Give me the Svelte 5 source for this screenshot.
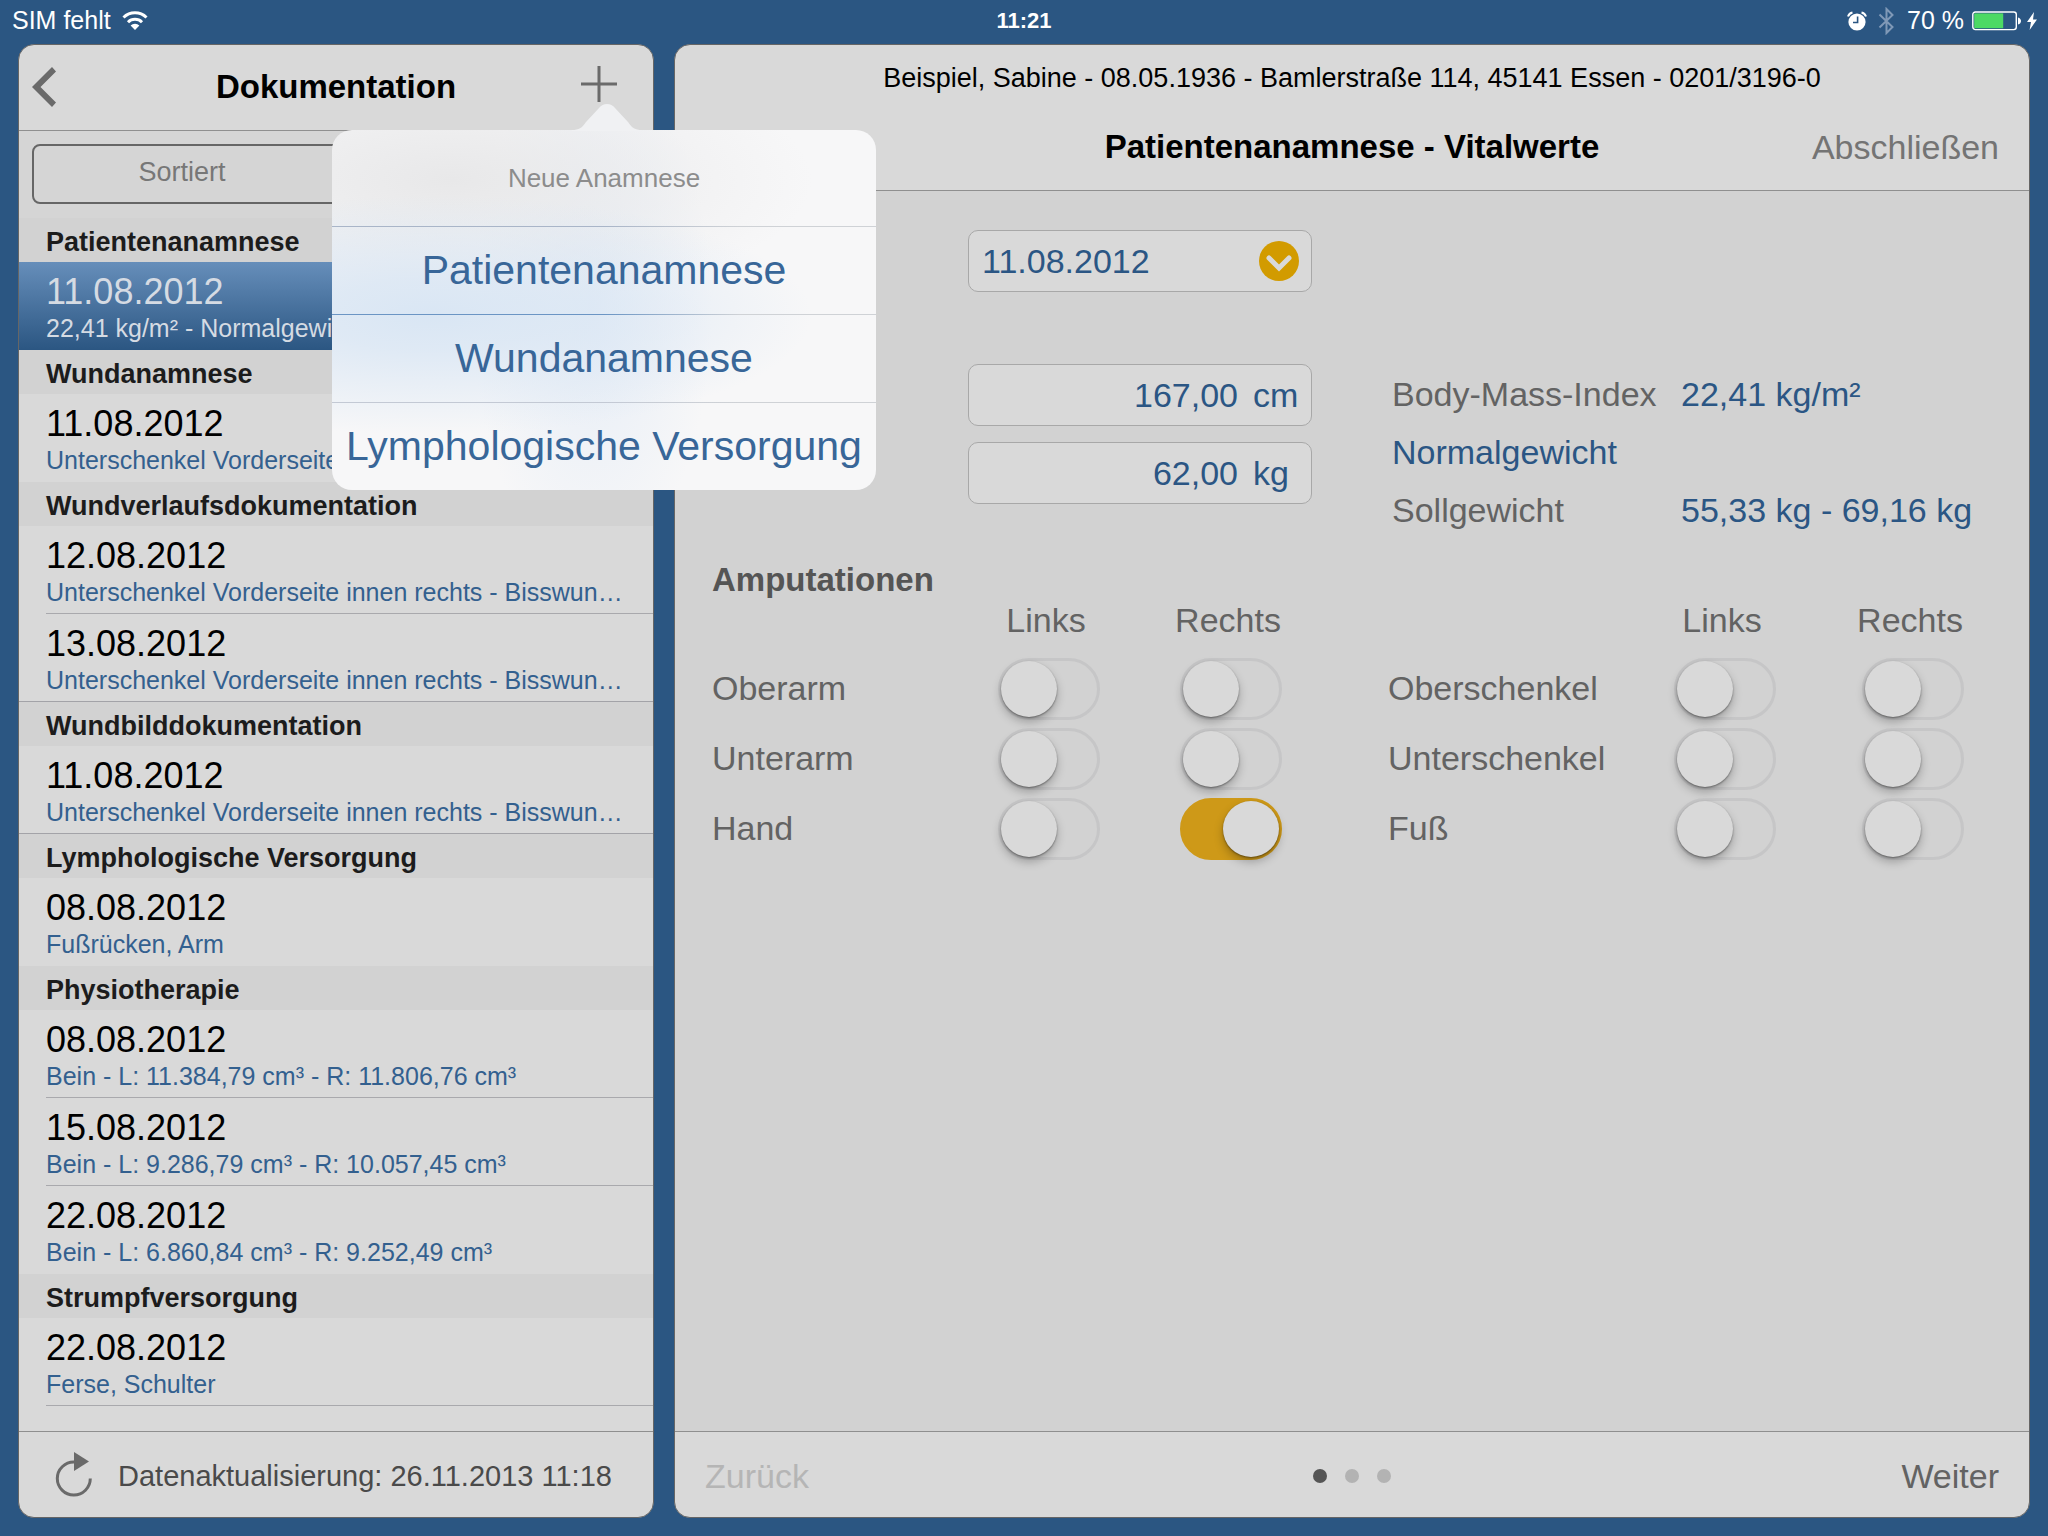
<script lang="ts">
	type Entry = { date: string; info: string; selected?: boolean };
	type Section = { title: string; ruled?: boolean; entries: Entry[] };
	type Limb = { name: string; left: boolean; right: boolean };

	const wound = 'Unterschenkel Vorderseite innen rechts - Bisswun…';

	const sections: Section[] = [
		{
			title: 'Patientenanamnese',
			entries: [{ date: '11.08.2012', info: '22,41 kg/m² - Normalgewicht', selected: true }]
		},
		{ title: 'Wundanamnese', entries: [{ date: '11.08.2012', info: wound }] },
		{
			title: 'Wundverlaufsdokumentation',
			ruled: true,
			entries: [
				{ date: '12.08.2012', info: wound },
				{ date: '13.08.2012', info: wound }
			]
		},
		{ title: 'Wundbilddokumentation', ruled: true, entries: [{ date: '11.08.2012', info: wound }] },
		{ title: 'Lymphologische Versorgung', entries: [{ date: '08.08.2012', info: 'Fußrücken, Arm' }] },
		{
			title: 'Physiotherapie',
			entries: [
				{ date: '08.08.2012', info: 'Bein - L: 11.384,79 cm³ - R: 11.806,76 cm³' },
				{ date: '15.08.2012', info: 'Bein - L: 9.286,79 cm³ - R: 10.057,45 cm³' },
				{ date: '22.08.2012', info: 'Bein - L: 6.860,84 cm³ - R: 9.252,49 cm³' }
			]
		},
		{ title: 'Strumpfversorgung', entries: [{ date: '22.08.2012', info: 'Ferse, Schulter' }] }
	];

	const templates = ['Patientenanamnese', 'Wundanamnese', 'Lymphologische Versorgung'];

	let height = $state('167,00');
	let weight = $state('62,00');

	let arms: Limb[] = $state([
		{ name: 'Oberarm', left: false, right: false },
		{ name: 'Unterarm', left: false, right: false },
		{ name: 'Hand', left: false, right: true }
	]);
	let legs: Limb[] = $state([
		{ name: 'Oberschenkel', left: false, right: false },
		{ name: 'Unterschenkel', left: false, right: false },
		{ name: 'Fuß', left: false, right: false }
	]);
</script>

{#snippet limbs(rows: Limb[], wide: boolean)}
	<div class="limbs" class:wide>
		<span class="side first">Links</span>
		<span class="side">Rechts</span>
		{#each rows as row}
			<span class="limb">{row.name}</span>
			<input type="checkbox" class="toggle" aria-label="{row.name} links" bind:checked={row.left} />
			<input type="checkbox" class="toggle" aria-label="{row.name} rechts" bind:checked={row.right} />
		{/each}
	</div>
{/snippet}

<div class="app">
	<div class="status">
		<div class="carrier">
			<span>SIM fehlt</span>
			<svg width="26" height="19" viewBox="0 0 26 19" fill="none" stroke="#fff" stroke-width="3">
				<path d="M1.5 6.5a16.5 16.5 0 0 1 23 0" />
				<path d="M6 11.2a10 10 0 0 1 14 0" />
				<path d="M13 19l-4.4-4.6a6.4 6.4 0 0 1 8.8 0z" fill="#fff" stroke="none" />
			</svg>
		</div>
		<strong>11:21</strong>
		<div class="indicators">
			<svg width="20" height="20" viewBox="0 0 20 20">
				<circle cx="10" cy="11" r="8.6" fill="#fff" />
				<path d="M1 5.5a6 6 0 0 1 4.5-4M19 5.5a6 6 0 0 0-4.5-4" fill="none" stroke="#fff" stroke-width="2" />
				<path d="M10.6 5.5v6H6" fill="none" stroke="#2b5682" stroke-width="1.6" />
			</svg>
			<svg class="bluetooth" width="17" height="28" viewBox="0 0 17 28" fill="none" stroke="#8099b7" stroke-width="2">
				<path d="M1.5 7.5l13 12.5-6 6V2l6 6-13 12.5" />
			</svg>
			<span>70 %</span>
			<svg class="battery" width="50" height="20" viewBox="0 0 50 20">
				<rect x="0.8" y="1" width="43.5" height="17.6" rx="2.5" fill="none" stroke="#fff" stroke-width="1.4" />
				<rect x="2.2" y="2.4" width="29" height="14.8" fill="#4cd964" />
				<path d="M46 6.5c4 1 4 6 0 7z" fill="#fff" />
			</svg>
			<svg width="12" height="20" viewBox="0 0 12 20">
				<path d="M8 1L1 11h4L3.6 19 11 8.5H7z" fill="#fff" />
			</svg>
		</div>
	</div>

	<main>
		<aside class="card">
			<header class="bar">
				<button class="back" aria-label="Zurück">
					<svg width="24" height="40" viewBox="0 0 24 40">
						<path d="M20 0l4 4.5L8.5 20 24 35.500l-4 4.500L0 20z" fill="#6a6a6a" />
					</svg>
				</button>
				<h1>Dokumentation</h1>
				<button class="add" aria-label="Neu">
					<svg width="36" height="36" viewBox="0 0 36 36" fill="none" stroke="#6a6a6a" stroke-width="3">
						<path d="M18 0v36M0 18h36" />
					</svg>
				</button>

				<div class="popover">
					<svg class="arrow" width="70" height="27" viewBox="0 0 70 27">
						<path
							d="M0 27v-1c7 0 10-2 14-8L27 4c4-5.300 12-5.300 16 0l13 14c4 6 7 8 14 8v1z"
							fill="#f0f1f3"
						/>
					</svg>
					<h2>Neue Anamnese</h2>
					{#each templates as template}
						<button>{template}</button>
					{/each}
				</div>
			</header>

			<div class="filter">
				<div class="segmented">
					<button>Sortiert</button>
				</div>
			</div>

			<div class="list">
				{#each sections as section}
					<section class:ruled={section.ruled}>
						<h3>{section.title}</h3>
						{#each section.entries as entry}
							<a href="#dokument" class:selected={entry.selected}>
								<span class="entry">
									<span class="date">{entry.date}</span>
									<span class="info">{entry.info}</span>
								</span>
							</a>
						{/each}
					</section>
				{/each}
			</div>

			<footer class="sync">
				<button aria-label="Aktualisieren">
					<svg width="38" height="46" viewBox="0 0 38 46">
						<path d="M35.300 26.500A16.500 16.500 0 1 1 19 10" fill="none" stroke="#6a6a6a" stroke-width="3" />
						<path d="M19 0l15 9.500L19 19z" fill="#6a6a6a" />
					</svg>
				</button>
				<span>Datenaktualisierung: 26.11.2013 11:18</span>
			</footer>
		</aside>

		<article class="card">
			<header class="heading">
				<p>Beispiel, Sabine - 08.05.1936 - Bamlerstraße 114, 45141 Essen - 0201/3196-0</p>
				<div class="title">
					<h1>Patientenanamnese - Vitalwerte</h1>
					<button>Abschließen</button>
				</div>
			</header>

			<form>
				<div class="field">
					<select aria-label="Datum">
						<option>11.08.2012</option>
					</select>
					<svg class="open" width="40" height="40" viewBox="0 0 40 40">
						<circle cx="20" cy="20" r="20" fill="#d29b00" />
						<path
							d="M10 17l10 10 10-10"
							fill="none"
							stroke="#d9d9d9"
							stroke-width="5"
							stroke-linecap="round"
						/>
					</svg>
				</div>

				<div class="columns vitals">
					<div class="fields">
						<div class="field">
							<input type="text" aria-label="Größe" bind:value={height} />
							<span class="unit">cm</span>
						</div>
						<div class="field">
							<input type="text" aria-label="Gewicht" bind:value={weight} />
							<span class="unit">kg</span>
						</div>
					</div>
					<dl>
						<dt>Body-Mass-Index</dt>
						<dd>22,41 kg/m²</dd>
						<dd class="rating">Normalgewicht</dd>
						<dt>Sollgewicht</dt>
						<dd>55,33 kg - 69,16 kg</dd>
					</dl>
				</div>

				<h2>Amputationen</h2>
				<div class="columns">
					{@render limbs(arms, false)}
					{@render limbs(legs, true)}
				</div>
			</form>

			<footer class="pager">
				<button disabled>Zurück</button>
				<div class="dots">
					<span class="current"></span>
					<span></span>
					<span></span>
				</div>
				<button class="next">Weiter</button>
			</footer>
		</article>
	</main>
</div>

<style>
	:global(body) {
		background: #2b5682;
	}

	.app {
		display: flex;
		flex-direction: column;
		min-height: 100vh;
		box-sizing: border-box;
		padding: 0 18px 18px;
		background: #2b5682;
		color: #000;
		font-family: 'Liberation Sans', Arial, sans-serif;
	}

	h1,
	h2,
	h3,
	p,
	dl,
	dd {
		margin: 0;
	}

	button,
	input,
	select {
		margin: 0;
		padding: 0;
		border: 0;
		background: none;
		color: inherit;
		font: inherit;
	}

	svg {
		display: block;
		flex: none;
	}

	h1 {
		font-size: 33px;
		font-weight: bold;
	}

	/* status bar */
	.status {
		display: grid;
		grid-template-columns: 1fr auto 1fr;
		align-items: center;
		height: 44px;
		margin: 0 -8px;
		padding-bottom: 3px;
		box-sizing: border-box;
		color: #fff;
		font-size: 25px;
	}
	.status strong {
		font-size: 22px;
	}
	.carrier,
	.indicators {
		display: flex;
		align-items: center;
	}
	.carrier {
		gap: 11px;
		padding-left: 2px;
	}
	.indicators {
		justify-content: flex-end;
	}
	.bluetooth {
		margin: 0 12px 0 11px;
	}
	.battery {
		margin: 0 4px 0 8px;
	}

	/* cards */
	main {
		flex: 1;
		display: grid;
		grid-template-columns: 636px minmax(0, 1fr);
		gap: 20px;
	}
	.card {
		display: flex;
		flex-direction: column;
		border: 1px solid #666;
		border-radius: 16px;
		background: #d9d9d9;
	}
	footer {
		display: flex;
		align-items: center;
		height: 85px;
		border-top: 1px solid #8f8f8f;
	}

	/* document list */
	.bar {
		position: relative;
		display: grid;
		grid-template-columns: 1fr auto 1fr;
		align-items: center;
		height: 83px;
		padding: 0 36px 2px 13px;
		border-bottom: 1px solid #8f8f8f;
	}
	.back {
		justify-self: start;
	}
	.bar h1 {
		padding-left: 23px;
	}
	.add {
		justify-self: end;
		padding-bottom: 6px;
	}
	.filter {
		padding: 13px 17px 14px 13px;
		background: #d5d5d5;
	}
	.segmented {
		display: flex;
		height: 56px;
		border: 2px solid #666;
		border-radius: 8px;
	}
	.segmented button {
		flex: 0 0 50%;
		padding: 0 4px 3px 0;
		color: #777;
		font-size: 27px;
	}
	.list {
		flex: 1;
	}
	h3 {
		height: 44px;
		padding: 2px 0 0 27px;
		box-sizing: border-box;
		background: #d2d2d2;
		color: #1c1c1c;
		font-size: 27px;
		line-height: 44px;
	}
	.list a {
		display: block;
		padding-left: 27px;
		color: inherit;
		text-decoration: none;
	}
	.entry {
		display: block;
		padding: 10px 0 5px;
		border-bottom: 1px solid transparent;
	}
	.list a:not(:last-child) .entry,
	section:last-child .entry {
		border-color: #a9a9ad;
	}
	.ruled a:last-child {
		box-shadow: inset 0 -1px #a3a3a8;
	}
	.date,
	.info {
		display: block;
		overflow: hidden;
		white-space: nowrap;
	}
	.date {
		font-size: 36px;
		line-height: 40px;
	}
	.info {
		color: #33608f;
		font-size: 25px;
		line-height: 32px;
	}
	.list .selected {
		background: linear-gradient(#668eba, #2b5682);
		color: #d5dbe3;
	}
	.selected .info {
		color: #d5dbe3;
	}
	.sync {
		gap: 25px;
		padding-left: 36px;
		color: #4a4a4a;
		font-size: 29px;
	}
	.sync span {
		padding-top: 3px;
	}

	/* new document menu */
	.popover {
		position: absolute;
		z-index: 2;
		top: 100%;
		left: 313px;
		width: 544px;
		border-radius: 20px;
		background:
			radial-gradient(ellipse 380px 120px at 100px 185px, #d9e6f4, #d9e6f4cc 30%, #d9e6f400),
			radial-gradient(ellipse 360px 130px at 120px 50px, #e8e8e9, #e8e8e900),
			radial-gradient(ellipse 120px 260px at 260px 180px, #e6edf6, #e6edf600),
			#f7f7f8;
	}
	.arrow {
		position: absolute;
		bottom: 100%;
		left: 240px;
		margin-bottom: -1px;
	}
	.popover h2 {
		color: #8c8c8c;
		font-size: 26px;
		font-weight: normal;
		line-height: 96px;
		text-align: center;
	}
	.popover button {
		display: block;
		width: 100%;
		height: 88px;
		background: linear-gradient(90deg, #a9b5c8 50%, #cfd2d6 75%) top / 100% 1px no-repeat;
		color: #386698;
		font-size: 41px;
		white-space: nowrap;
	}
	.popover button:nth-of-type(2) {
		background-image: linear-gradient(90deg, #6b95c4 50%, #cfd2d6 75%);
	}
	.popover button:nth-of-type(3) {
		background-image: linear-gradient(90deg, #c3c9d4 50%, #cfd2d6 75%);
	}

	/* vital signs */
	.heading {
		height: 145px;
		border-bottom: 1px solid #8f8f8f;
		text-align: center;
	}
	.heading p {
		font-size: 27px;
		line-height: 66px;
	}
	.title {
		display: grid;
		grid-template-columns: 1fr auto 1fr;
		align-items: center;
		height: 72px;
		padding: 0 30px;
	}
	.title h1 {
		grid-column: 2;
	}
	.title button {
		justify-self: end;
		color: #747474;
		font-size: 34px;
	}
	form {
		flex: 1;
		padding: 39px 31px 39px 37px;
		background: #d2d2d2;
		color: #636363;
		font-size: 34px;
	}
	.columns {
		display: grid;
		grid-template-columns: 676px minmax(0, 1fr);
		align-items: start;
	}
	.vitals {
		margin-top: 72px;
	}
	.fields {
		display: grid;
		gap: 16px;
	}
	.field {
		display: flex;
		align-items: center;
		width: 344px;
		height: 62px;
		margin-left: 256px;
		box-sizing: border-box;
		border: 1px solid #a8a8a8;
		border-radius: 10px;
		background: #d9d9d9;
		color: #2b5684;
	}
	.field select {
		flex: 1;
		height: 100%;
		padding-left: 13px;
		appearance: none;
	}
	.field input {
		flex: 1;
		min-width: 0;
		text-align: right;
	}
	.open {
		margin-right: 12px;
		pointer-events: none;
	}
	.unit {
		width: 58px;
		padding-left: 15px;
	}
	dl {
		display: grid;
		grid-template-columns: 289px 1fr;
		padding: 1px 0 0 4px;
		line-height: 58px;
		white-space: nowrap;
	}
	dd {
		color: #2b5684;
	}
	.rating {
		grid-column: 1 / -1;
	}
	form h2 {
		margin-top: 21px;
		color: #555;
		font-size: 33px;
		line-height: 40px;
	}
	.limbs {
		display: grid;
		grid-template-columns: 210px 110px 110px;
		grid-template-rows: 54px;
		grid-auto-rows: 70px;
		column-gap: 72px;
		align-items: center;
		justify-items: center;
	}
	.limbs.wide {
		grid-template-columns: 204px 110px 110px;
		column-gap: 78px;
	}
	.side {
		align-self: start;
		padding-right: 6px;
		line-height: 40px;
	}
	.side.first {
		grid-column: 2;
	}
	.limb {
		justify-self: start;
		padding-bottom: 2px;
		white-space: nowrap;
	}
	.toggle {
		appearance: none;
		width: 102px;
		height: 62px;
		box-sizing: border-box;
		border: 3px solid #c6c6c7;
		border-radius: 31px;
	}
	.toggle::before {
		content: '';
		display: block;
		width: 56px;
		height: 56px;
		border-radius: 50%;
		background: #d9d9d9;
		box-shadow:
			0 1px 2px #00000066,
			0 5px 10px #00000040;
	}
	.toggle:checked {
		border-color: #ce9918;
		background: #ce9918;
	}
	.toggle:checked::before {
		margin-left: auto;
	}

	/* page footer */
	.pager {
		display: grid;
		grid-template-columns: 1fr auto 1fr;
		padding: 0 30px;
		color: #636363;
		font-size: 34px;
	}
	.pager button {
		justify-self: start;
		padding-top: 3px;
	}
	.pager button:disabled {
		color: #b5b5b5;
	}
	.pager .next {
		justify-self: end;
	}
	.dots {
		display: flex;
		gap: 18px;
		padding-top: 2px;
	}
	.dots span {
		width: 14px;
		height: 14px;
		border-radius: 50%;
		background: #b3b3b3;
	}
	.dots .current {
		background: #555;
	}
</style>
